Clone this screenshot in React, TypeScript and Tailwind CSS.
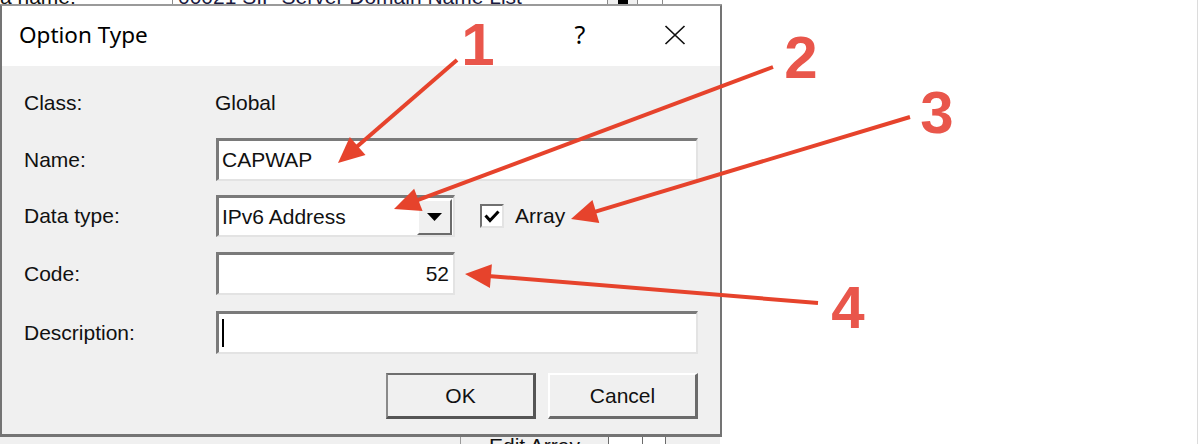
import * as React from 'react'

const FONT = {fontFamily: '"Liberation Sans", Arial, sans-serif'}

type Arrow = {x1: number; y1: number; x2: number; y2: number}

const arrows: Arrow[] = [
  {x1: 457, y1: 60, x2: 338, y2: 163},
  {x1: 773, y1: 67, x2: 394, y2: 209},
  {x1: 910, y1: 117, x2: 571, y2: 219},
  {x1: 818, y1: 303, x2: 465, y2: 274},
]

const labels = [
  {n: '1', x: 478, y: 65},
  {n: '2', x: 801, y: 78},
  {n: '3', x: 937, y: 133},
  {n: '4', x: 848, y: 328},
]

function head(a: Arrow, len = 26, half = 12) {
  const dx = a.x2 - a.x1
  const dy = a.y2 - a.y1
  const d = Math.hypot(dx, dy)
  const ux = dx / d
  const uy = dy / d
  const bx = a.x2 - ux * len
  const by = a.y2 - uy * len
  return {
    bx: bx + ux * 3,
    by: by + uy * 3,
    points: `${a.x2},${a.y2} ${bx - uy * half},${by + ux * half} ${bx + uy * half},${by - ux * half}`,
  }
}

const Annotations = () => (
  <svg
    className="absolute inset-0 pointer-events-none"
    width={1198}
    height={444}
    viewBox="0 0 1198 444"
  >
    {arrows.map((a, i) => {
      const h = head(a)
      return (
        <g key={i}>
          <line x1={a.x1} y1={a.y1} x2={h.bx} y2={h.by} stroke="#e6432c" strokeWidth={4} />
          <polygon points={h.points} fill="#e6432c" />
        </g>
      )
    })}
    {labels.map((l) => (
      <text
        key={l.n}
        x={l.x}
        y={l.y}
        textAnchor="middle"
        fontSize={60}
        fontWeight={700}
        fill="#e9564b"
        style={FONT}
      >
        {l.n}
      </text>
    ))}
  </svg>
)

const Sunken = ({className = '', children}: {className?: string; children?: React.ReactNode}) => (
  <div
    className={
      'flex items-center bg-white border-t-[3px] border-l-[3px] border-r-2 border-b-2 border-t-[#7a7a7a] border-l-[#7a7a7a] border-r-[#e3e3e3] border-b-[#e3e3e3] ' +
      className
    }
  >
    {children}
  </div>
)

const Row = ({label, className = '', children}: {label: string; className?: string; children?: React.ReactNode}) => (
  <div className={'flex items-center ' + className}>
    <div className="w-[192px] shrink-0">{label}</div>
    {children}
  </div>
)

const Dialog = () => (
  <div
    className="w-[722px] h-[432px] shrink-0 flex flex-col border-l-2 border-r-2 border-t border-b-[3px] border-[#747474] border-t-[#9a9a9a] text-[21px] text-[#111]"
    style={FONT}
  >
    {/* title bar */}
    <div className="h-[60px] bg-white flex items-center pl-[17px] pb-[3px]">
      <span className="text-[22.5px] text-black" style={{fontFamily: '"Noto Sans", "Open Sans", sans-serif'}}>
        Option Type
      </span>
      <span
        className="ml-auto text-[25px] text-black w-[24px] text-center"
        style={{fontFamily: '"Noto Sans", "Open Sans", sans-serif'}}
      >
        ?
      </span>
      <svg className="ml-[72px] mr-[34px]" width="22" height="20" viewBox="0 0 22 20">
        <path d="M1.5 1 L20.5 19 M20.5 1 L1.5 19" stroke="#111" strokeWidth="1.7" fill="none" />
      </svg>
    </div>

    {/* body */}
    <div className="flex-1 bg-[#f0f0f0] flex flex-col pl-[22px] pt-[15px]">
      <Row label="Class:" className="h-[43px]">
        <span className="-ml-[1px]">Global</span>
      </Row>
      <Row label="Name:" className="h-[43px] mt-[14px]">
        <Sunken className="w-[482px] h-full pl-[3px]">CAPWAP</Sunken>
      </Row>
      <Row label="Data type:" className="h-[42px] mt-[14px]">
        <Sunken className="w-[239px] h-full pl-[3px] pr-[1px]">
          <span className="flex-1">IPv6 Address</span>
          <div className="w-[35px] h-[36px] bg-[#f0f0f0] border-t-2 border-l-2 border-r-2 border-b-2 border-t-white border-l-white border-r-[#6b6b6b] border-b-[#6b6b6b] flex items-center justify-center">
            <svg width="15" height="8" viewBox="0 0 15 8">
              <path d="M0 0 H15 L7.5 8 Z" fill="#000" />
            </svg>
          </div>
        </Sunken>
        <div className="ml-[25px] w-[24px] h-[24px] bg-white border-t-2 border-l-2 border-r-2 border-b-2 border-t-[#707070] border-l-[#707070] border-r-[#e3e3e3] border-b-[#e3e3e3] flex items-center justify-center">
          <svg width="16" height="13" viewBox="0 0 16 13">
            <path d="M1.5 5.5 L6 10.5 L14.5 1.5" stroke="#000" strokeWidth="3" fill="none" />
          </svg>
        </div>
        <span className="ml-[11px]">Array</span>
      </Row>
      <Row label="Code:" className="h-[43px] mt-[15px]">
        <Sunken className="w-[239px] h-full justify-end pr-[4px]">52</Sunken>
      </Row>
      <Row label="Description:" className="h-[43px] mt-[16px]">
        <Sunken className="w-[482px] h-full pl-[3px]">
          <div className="w-[2px] h-[28px] bg-black" />
        </Sunken>
      </Row>
      <div className="flex h-[46px] mt-[19px] pl-[362px] gap-[12px]">
        <div className="w-[150px] h-full flex items-center justify-center bg-[#f0f0f0] border-t-2 border-l-2 border-r-[3px] border-b-[3px] border-t-[#6e6e6e] border-l-[#8a8a8a] border-r-[#555] border-b-[#555]">
          OK
        </div>
        <div className="w-[150px] h-full flex items-center justify-center bg-[#f0f0f0] border-t-2 border-l-2 border-r-[3px] border-b-[3px] border-t-white border-l-white border-r-[#6b6b6b] border-b-[#6b6b6b]">
          Cancel
        </div>
      </div>
    </div>
  </div>
)

export default function App() {
  return (
    <div
      className="relative w-[1198px] h-[444px] bg-white overflow-hidden flex flex-col border-r border-[#dcdcdc] text-[#111]"
      style={FONT}
    >
      {/* window behind, top edge */}
      <div className="h-[5px] w-[722px] flex overflow-hidden text-[21px] leading-[23px] border-b border-[#9a9a9a] bg-white">
        <div className="w-[173px] shrink-0 border-r border-[#8a8a8a] -mt-[15px] h-[23px] whitespace-nowrap">a name:</div>
        <div className="w-[434px] shrink-0 -mt-[15px] h-[23px] pl-[5px] whitespace-nowrap text-[#1a1a40]">
          00021 SIP Server Domain Name List
        </div>
        <div className="w-[31px] shrink-0 border-x border-[#8a8a8a] bg-[#f0f0f0] flex justify-center">
          <div className="w-[10px] h-[4px] bg-black" />
        </div>
        <div className="w-[25px] shrink-0 border-r border-[#8a8a8a]" />
      </div>

      {/* dialog */}
      <div className="flex h-[432px]">
        <Dialog />
      </div>

      {/* window behind, bottom edge */}
      <div className="h-[7px] w-[720px] flex overflow-hidden bg-[#f0f0f0] text-[21px] leading-[23px]">
        <div className="w-[460px] shrink-0" />
        <div className="w-[148px] shrink-0 border-l border-[#9a9a9a] text-center -mt-[3px] h-[23px]">Edit Array</div>
        <div className="w-[34px] shrink-0 border-l border-[#6b6b6b] bg-white" />
        <div className="w-[24px] shrink-0 border-x border-[#6b6b6b] bg-white" />
      </div>

      <Annotations />
    </div>
  )
}
